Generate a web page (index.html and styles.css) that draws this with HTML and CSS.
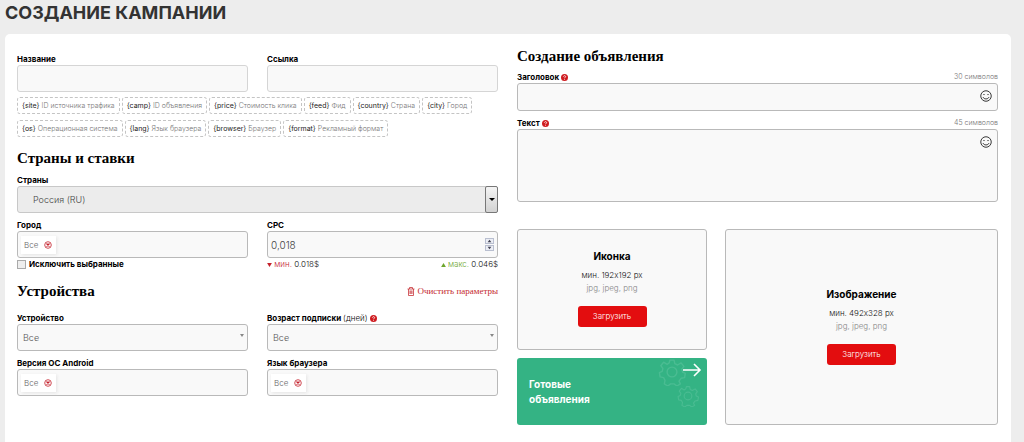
FILE: index.html
```html
<!DOCTYPE html>
<html lang="ru">
<head>
<meta charset="utf-8">
<meta name="viewport" content="width=device-width, initial-scale=1">
<title>Создание кампании</title>
<link rel="stylesheet" href="styles.css">
</head>
<body>
<svg class="sprite" aria-hidden="true">
  <symbol id="i-remove" viewBox="0 0 16 16"><circle cx="8" cy="8" r="6.6" fill="none" stroke="currentColor" stroke-width="1.6"/><path d="M5 5l6 6M11 5l-6 6" stroke="currentColor" stroke-width="2.6"/></symbol>
  <symbol id="i-help" viewBox="0 0 16 16"><circle cx="8" cy="8" r="8" fill="currentColor"/><path d="M5.6 6.2c0-3.2 4.9-3.1 4.9-.2 0 1.700-2.400 1.800-2.400 3.500M8.100 11v2" fill="none" stroke="#fff" stroke-width="1.900"/></symbol>
  <symbol id="i-smile" viewBox="0 0 16 16"><g fill="none" stroke="currentColor" stroke-width="1.300"><circle cx="8" cy="8" r="7"/><path d="M4 9.500c1.300 3.200 6.700 3.200 8 0M4.500 6.600c.3-1 1.300-1 1.600 0M9.900 6.600c.3-1 1.300-1 1.600 0"/></g></symbol>
  <symbol id="i-gear" viewBox="0 0 40 40"><g fill="none" stroke="currentColor" stroke-width="2" stroke-linejoin="round"><path d="M17 3h6l1 5 4 2 5-3 4 5-3 4 1 4 4 2-1 6-5 1-3 4 2 4-5 3-4-3h-5l-4 3-5-3 1-5-2-4-5-1-1-6 4-2 1-4-3-4 4-5 5 3 3-2z"/><circle cx="20" cy="20" r="7"/></g></symbol>
</svg>

<h1 class="page-title">СОЗДАНИЕ КАМПАНИИ</h1>

<main class="panel">
  <form class="column">
    <div class="pair">
      <div class="field">
        <label class="label" for="name">Название</label>
        <input class="control control-soft" id="name" type="text">
      </div>
      <div class="field">
        <label class="label" for="link">Ссылка</label>
        <input class="control control-soft" id="link" type="text">
      </div>
    </div>

    <ul class="tags">
      <li class="tag"><b>{site}</b> ID источника трафика</li>
      <li class="tag"><b>{camp}</b> ID объявления</li>
      <li class="tag"><b>{price}</b> Стоимость клика</li>
      <li class="tag"><b>{feed}</b> Фид</li>
      <li class="tag"><b>{country}</b> Страна</li>
      <li class="tag"><b>{city}</b> Город</li>
      <li class="tag"><b>{os}</b> Операционная система</li>
      <li class="tag"><b>{lang}</b> Язык браузера</li>
      <li class="tag"><b>{browser}</b> Браузер</li>
      <li class="tag"><b>{format}</b> Рекламный формат</li>
    </ul>

    <h2 class="section-title">Страны и ставки</h2>
    <div class="field">
      <label class="label" for="country">Страны</label>
      <div class="country">
        <select class="control country-select" id="country"><option>Россия (RU)</option></select>
        <span class="country-arrow"></span>
      </div>
    </div>

    <div class="pair pair-rates">
      <div class="field">
        <label class="label" for="city">Город</label>
        <div class="control chips">
          <span class="chip">Все <button class="chip-remove" type="button" aria-label="Убрать"><svg><use href="#i-remove"/></svg></button></span>
          <input class="chip-input" id="city" type="text">
        </div>
        <label class="check"><input class="check-box" type="checkbox">Исключить выбранные</label>
      </div>
      <div class="field">
        <label class="label" for="cpc">CPC</label>
        <div class="control number">
          <input class="number-input" id="cpc" type="text" inputmode="decimal" value="0,018">
          <span class="spin">
            <button class="spin-button" type="button" aria-label="Больше"><svg viewBox="0 0 8 6"><path d="M4 1l3 4H1z"/></svg></button>
            <button class="spin-button" type="button" aria-label="Меньше"><svg viewBox="0 0 8 6"><path d="M4 5L1 1h6z"/></svg></button>
          </span>
        </div>
        <div class="limits">
          <span><svg class="limit-icon limit-min" viewBox="0 0 6 5"><path d="M0 0h6L3 5z"/></svg> <span class="limit-min">мин.</span> 0.018$</span>
          <span><svg class="limit-icon limit-max" viewBox="0 0 6 5"><path d="M0 5h6L3 0z"/></svg> <span class="limit-max">макс.</span> 0.046$</span>
        </div>
      </div>
    </div>

    <div class="section-head">
      <h2 class="section-title">Устройства</h2>
      <a class="clear" href="#"><svg class="clear-icon" viewBox="0 0 16 18"><path d="M1 4h14M5 4V1h6v3M3 4v13h10V4M6 7v7M8 7v7M10 7v7" fill="none" stroke="currentColor" stroke-width="1.500"/></svg>Очистить параметры</a>
    </div>
    <div class="pair pair-devices">
      <div class="field">
        <label class="label" for="device">Устройство</label>
        <div class="dropdown"><select class="control dropdown-select" id="device"><option>Все</option></select><span class="dropdown-arrow"></span></div>
      </div>
      <div class="field">
        <div class="label-row"><label class="label" for="age">Возраст подписки <span class="label-note">(дней)</span></label><svg class="help"><use href="#i-help"/></svg></div>
        <div class="dropdown"><select class="control dropdown-select" id="age"><option>Все</option></select><span class="dropdown-arrow"></span></div>
      </div>
      <div class="field">
        <label class="label" for="os">Версия ОС Android</label>
        <div class="control chips">
          <span class="chip">Все <button class="chip-remove" type="button" aria-label="Убрать"><svg><use href="#i-remove"/></svg></button></span>
          <input class="chip-input" id="os" type="text">
        </div>
      </div>
      <div class="field">
        <label class="label" for="lang">Язык браузера</label>
        <div class="control chips">
          <span class="chip">Все <button class="chip-remove" type="button" aria-label="Убрать"><svg><use href="#i-remove"/></svg></button></span>
          <input class="chip-input" id="lang" type="text">
        </div>
      </div>
    </div>
  </form>

  <form class="column">
    <h2 class="section-title ad-title">Создание объявления</h2>
    <div class="field">
      <div class="label-row"><label class="label" for="headline">Заголовок</label><svg class="help"><use href="#i-help"/></svg><span class="counter">30 символов</span></div>
      <div class="control emoji-field">
        <input class="emoji-text" id="headline" type="text">
        <button class="emoji" type="button" aria-label="Эмодзи"><svg><use href="#i-smile"/></svg></button>
      </div>
    </div>
    <div class="field text-field">
      <div class="label-row"><label class="label" for="text">Текст</label><svg class="help"><use href="#i-help"/></svg><span class="counter">45 символов</span></div>
      <div class="control emoji-field emoji-area">
        <textarea class="emoji-text" id="text"></textarea>
        <button class="emoji" type="button" aria-label="Эмодзи"><svg><use href="#i-smile"/></svg></button>
      </div>
    </div>

    <div class="media">
      <div class="media-side">
        <section class="upload">
          <h3 class="upload-title">Иконка</h3>
          <p class="upload-size">мин. 192x192 px</p>
          <p class="upload-types">jpg, jpeg, png</p>
          <button class="upload-button" type="button">Загрузить</button>
        </section>
        <a class="ready" href="#">
          <span>Готовые<br>объявления</span>
          <svg class="ready-art" viewBox="0 0 54 50"><g class="ready-gears"><use href="#i-gear" x="1" y="0" width="28" height="28"/><use href="#i-gear" x="20" y="27" width="22" height="22"/></g><path d="M26 12h17M37 6l6 6-6 6" fill="none" stroke="#fff" stroke-width="1.600"/></svg>
        </a>
      </div>
      <section class="upload">
        <h3 class="upload-title">Изображение</h3>
        <p class="upload-size">мин. 492x328 px</p>
        <p class="upload-types">jpg, jpeg, png</p>
        <button class="upload-button" type="button">Загрузить</button>
      </section>
    </div>
  </form>
</main>
</body>
</html>
```

FILE: styles.css
```css
* { box-sizing: border-box; }

body {
  display: flex;
  flex-direction: column;
  min-height: 100vh;
  margin: 0;
  padding: 0 13px 0 5px;
  background: #ededed;
  color: #111;
  font-family: Inter, "Liberation Sans", sans-serif;
  font-size: 8px;
  line-height: 12px;
}

button, input, select, textarea { margin: 0; padding: 0; border: 0; background: none; color: inherit; font: inherit; outline: 0; }
button { cursor: pointer; }
svg { display: block; }
h1, h2, h3, p, ul { margin: 0; padding: 0; }
.sprite { position: absolute; width: 0; height: 0; }

.page-title { padding: 1px 0 9px; color: #333; font-size: 18px; line-height: 24px; font-weight: 700; }

.panel {
  display: grid;
  flex: 1;
  grid-template-columns: repeat(2, minmax(0, 1fr));
  gap: 19px;
  padding: 0 13px 16px 12px;
  border-radius: 5px 5px 0 0;
  background: #fff;
}
.column { display: flex; flex-direction: column; padding-top: 19px; }
.column + .column { padding-top: 12px; }

.pair { display: grid; grid-template-columns: repeat(2, minmax(0, 1fr)); gap: 6px 19px; }
.pair-rates { margin-top: 6px; }
.pair-devices { margin-top: 11px; }
.field { display: flex; flex-direction: column; min-width: 0; }
.label { font-weight: 700; color: #000; }
.label-note { font-weight: 300; }
.label-row { display: flex; align-items: center; gap: 2px; }
.help { width: 7px; height: 7px; color: #cf1c20; }
.counter { margin-left: auto; color: #777; font-size: 7px; font-weight: 300; }

.control { width: 100%; height: 27px; border: 1px solid #b9b9b9; border-radius: 3px; background: #f9f9f9; }
.control-soft { padding: 0 6px; border-color: #d5d5d5; }

.tags { display: flex; flex-wrap: wrap; gap: 6px 2px; margin-top: 5px; list-style: none; }
.tag { padding: 2px 4px; border: 1px dashed #c4c4c4; border-radius: 3px; color: #777; font-size: 7px; line-height: 11px; font-weight: 300; white-space: nowrap; }
.tag b { color: #222; font-weight: 400; }

.section-title { color: #000; font-family: "Liberation Serif", serif; font-size: 15px; line-height: 20px; font-weight: 700; }
.tags + .section-title { margin: 11px 0 6px; }
.ad-title { margin-bottom: 5px; }
.section-head { display: flex; align-items: center; justify-content: space-between; margin-top: 11px; }
.clear { display: flex; align-items: center; gap: 3px; color: #c4282d; font-family: "Liberation Serif", serif; font-size: 9px; text-decoration: none; }
.clear-icon { width: 8px; height: 9px; }

.country { display: grid; }
.country-select { grid-area: 1 / 1; padding: 0 15px; appearance: none; background: #ececec; border-color: #c8c8c8; color: #444; font-size: 9px; font-weight: 300; }
.country-arrow { display: grid; grid-area: 1 / 1; place-items: center; justify-self: end; width: 13px; border: 1px solid #777; border-radius: 2px; background: linear-gradient(#f4f4f4, #d2d2d2); pointer-events: none; }
.country-arrow::after { content: ""; border: 3px solid transparent; border-top-color: #000; border-bottom: 0; }

.dropdown { display: grid; }
.dropdown-select { grid-area: 1 / 1; padding: 0 5px; appearance: none; color: #555; font-size: 9px; font-weight: 300; }
.dropdown-arrow { grid-area: 1 / 1; place-self: center end; margin: 0 4px 4px 0; border: 2px solid transparent; border-top: 3px solid #888; border-bottom: 0; pointer-events: none; }

.chips { display: flex; align-items: center; padding: 0 3px; }
.chip { display: flex; align-items: center; gap: 6px; height: 18px; padding: 0 4px 0 3px; background: #fff; box-shadow: 1px 1px 3px #e4e4e4; color: #666; font-weight: 300; }
.chip-remove { width: 8px; height: 8px; color: #c4202b; }
.chip-remove svg { width: 8px; height: 8px; }
.chip-input { flex: 1; min-width: 0; height: 100%; }

.check { display: flex; align-items: center; gap: 3px; color: #000; font-weight: 700; }
.check-box { width: 9px; height: 9px; border: 1px solid #aaa; background: #eee; appearance: none; }
.check-box:checked { background: #777; }

.number { display: flex; align-items: center; padding: 0 3px; }
.number-input { flex: 1; min-width: 0; color: #444; font-size: 10px; font-weight: 300; }
.spin { display: grid; gap: 1px; }
.spin-button { display: grid; place-items: center; width: 9px; height: 6px; border: 1px solid #b9bfd0; background: #eceef5; }
.spin-button svg { width: 5px; height: 4px; fill: #445; }
.limits { display: flex; justify-content: space-between; font-weight: 300; line-height: 12px; }
.limit-icon { display: inline-block; width: 5px; height: 4px; fill: currentColor; }
.limit-min { color: #c4202b; }
.limit-max { color: #6da52c; }

.text-field { margin-top: 6px; }
.emoji-field { display: flex; align-items: flex-start; padding: 6px 5px; height: 28px; }
.emoji-area { height: 73px; }
.emoji-text { flex: 1; min-width: 0; height: 100%; resize: none; }
.emoji { color: #333; }
.emoji svg { width: 12px; height: 12px; }

.media { display: grid; grid-template-columns: 190fr 273fr; gap: 18px; margin-top: 27px; }
.media-side { display: grid; grid-template-rows: 121px auto; gap: 8px; }
.upload { display: flex; flex-direction: column; align-items: center; justify-content: center; min-height: 121px; padding-bottom: 3px; border: 1px solid #b9b9b9; border-radius: 3px; background: #f9f9f9; font-size: 8px; font-weight: 300; line-height: 13px; }
.upload-title { margin-bottom: 6px; color: #000; font-size: 10px; line-height: 14px; font-weight: 700; }
.upload-types { color: #888; }
.upload-button { width: 69px; height: 21px; margin-top: 11px; border-radius: 3px; background: #e30d0f; color: #fff; }

.ready { display: flex; justify-content: space-between; min-height: 67px; padding: 0 0 0 12px; border-radius: 3px; background: #34b384; color: #fff; font-size: 10px; line-height: 15px; font-weight: 700; text-decoration: none; }
.ready span { align-self: center; }
.ready-art { width: 54px; height: 50px; margin-right: -4px; }
.ready-gears { color: #4abc92; }
```
